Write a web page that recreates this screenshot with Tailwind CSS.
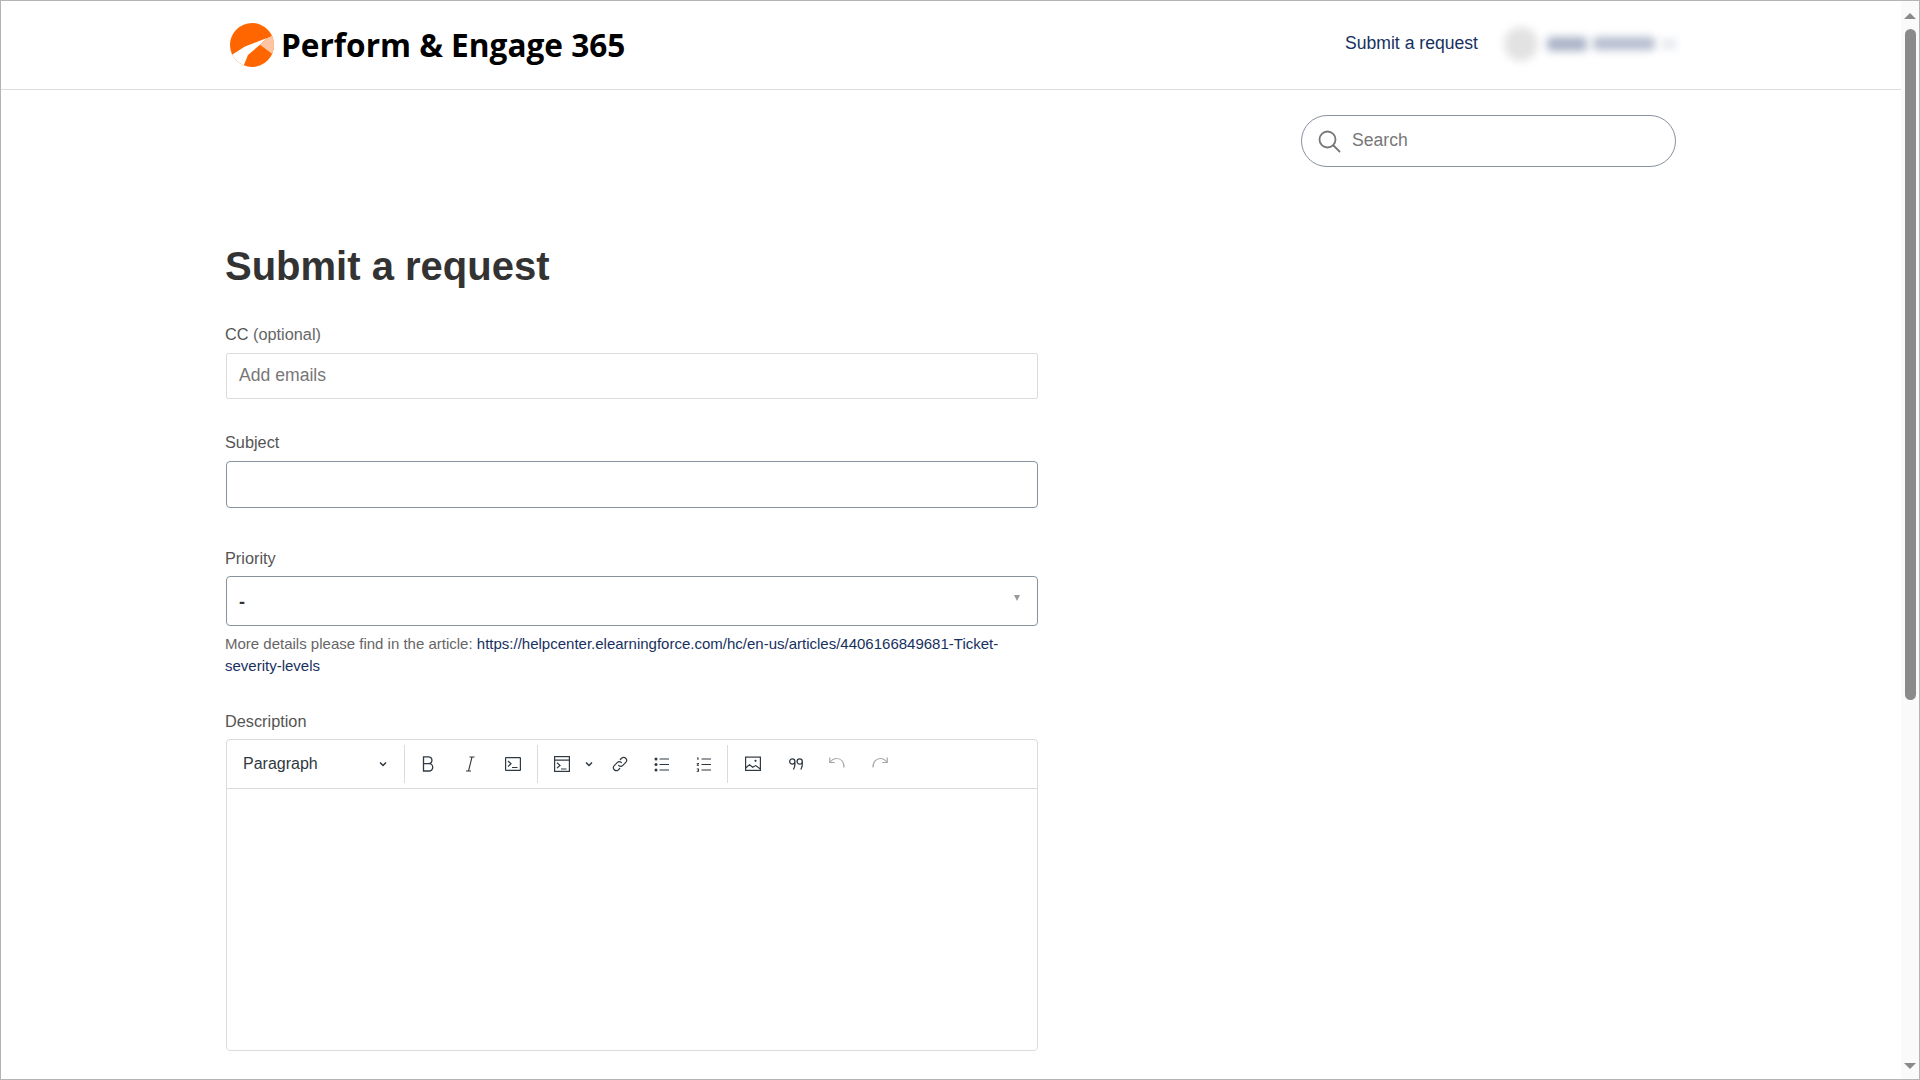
<!DOCTYPE html>
<html lang="en">
<head>
<meta charset="utf-8">
<title>Submit a request</title>
<script src="https://cdn.jsdelivr.net/npm/@tailwindcss/browser@4"></script>
</head>
<body class="m-0 bg-white">
<div class="flex h-[1080px] w-[1920px] overflow-hidden border border-[#b4b4b4] bg-white font-['Liberation_Sans',Arial,sans-serif] text-[#2f3941]">
  <main class="min-w-0 flex-1">
    <header class="flex h-[89px] items-center border-b border-[#dcdcdc] pl-[229px] pr-[224px]">
      <a class="flex items-center gap-[7px]">
        <svg class="h-[44px] w-[44px] shrink-0" viewBox="0 0 44 44">
          <defs><clipPath id="c"><circle cx="22" cy="22" r="22"/></clipPath></defs>
          <circle cx="22" cy="22" r="22" fill="#ff6600"/>
          <g clip-path="url(#c)">
            <path d="M37 15 L15 23.5 L0 33 L13.5 43 L18 32 L30 21.7 Z" fill="#fff"/>
            <path d="M30 21.7 L37 15 L44 12 L44 31 L41 30 Z" fill="#ffc5a3"/>
          </g>
        </svg>
        <span class="font-['Open_Sans',sans-serif] text-[31.6px] font-bold leading-none text-black">Perform &amp; Engage 365</span>
      </a>
      <nav class="ml-auto flex items-center pb-[3px]">
        <a class="text-[17.6px] leading-none text-[#17315f]">Submit a request</a>
        <div class="ml-[26px] flex items-center">
          <div class="h-[34px] w-[34px] rounded-full bg-[#e2e2e2] blur-[4px]"></div>
          <div class="ml-[9px] h-[14px] w-[40px] rounded bg-[#a9b2c6] blur-[4px]"></div>
          <div class="ml-[6px] h-[13px] w-[62px] rounded bg-[#b4bccd] blur-[4px]"></div>
          <div class="ml-[6px] h-[12px] w-[16px] bg-[#eceef2] blur-[3px]"></div>
        </div>
      </nav>
    </header>
    <div class="pl-[224px] pr-[225px]">
      <div class="flex justify-end pt-[25px]">
        <div class="flex h-[52px] w-[375px] items-center rounded-full border border-[#87929d] pl-[15px]">
          <svg class="h-[24px] w-[24px] text-[#777]" viewBox="0 0 24 24" fill="none" stroke="currentColor" stroke-width="1.8" stroke-linecap="round"><circle cx="10.5" cy="10.5" r="8"/><path d="M16.5 16.5l6 6"/></svg>
          <span class="mb-[2px] ml-[11px] text-[17.6px] text-[#777]">Search</span>
        </div>
      </div>
      <h1 class="mt-[74px] text-[40px] font-bold leading-[50px] text-[#333]">Submit a request</h1>
      <form class="w-[813px]">
        <label class="mt-[32px] block text-[16.3px] leading-[22px] text-[#555]">CC <span class="text-[#666]">(optional)</span></label>
        <div class="mt-[8px] ml-[1px] flex h-[46px] items-center rounded-[2px] border border-[#dcdcdc] pb-[2px] pl-[12px] text-[17.6px] text-[#777]">Add emails</div>
        <label class="mt-[32px] block text-[16.3px] leading-[22px] text-[#555]">Subject</label>
        <div class="mt-[8px] ml-[1px] h-[47px] rounded-[4px] border border-[#87929d]"></div>
        <label class="mt-[39px] block text-[16.3px] leading-[22px] text-[#555]">Priority</label>
        <div class="relative mt-[7px] ml-[1px] flex h-[50px] items-center rounded-[4px] border border-[#87929d] pl-[12px] text-[18px] font-bold text-[#333]">
          <span class="pt-[2px]">-</span>
          <span class="absolute right-[17px] top-[18px] h-0 w-0 border-x-[3.5px] border-t-[6px] border-x-transparent border-t-[#999]"></span>
        </div>
        <p class="mt-[7px] text-[15px] leading-[22px] text-[#666]">More details please find in the article: <a class="text-[#17315f]">https://helpcenter.elearningforce.com/hc/en-us/articles/4406166849681-Ticket-severity-levels</a></p>
        <label class="mt-[33px] block text-[16.3px] leading-[22px] text-[#555]">Description</label>
        <div class="mt-[7px] ml-[1px] h-[312px] rounded-[4px] border border-[#d8dcde]">
          <div class="flex h-[49px] items-center border-b border-[#d8dcde]">
            <div class="flex w-[177px] items-center pl-[16px] pr-[16px] text-[16px] leading-none">
              <span>Paragraph</span>
              <svg class="ml-auto h-[10px] w-[10px]" viewBox="0 0 10 10" fill="none" stroke="#2f3941" stroke-width="1.5"><path d="M2 3.5l3 3 3-3"/></svg>
            </div>
            <i class="h-[38px] w-px bg-[#d8dcde]"></i>
            <span class="flex w-[46px] justify-center">
              <svg class="h-[16px] w-[16px]" viewBox="0 0 16 16" fill="none" stroke="#2f3941" stroke-width="1.3"><path d="M3.5.8h5a3.4 3.4 0 0 1 0 6.900h-5zM3.500 7.700h5.600a3.600 3.600 0 0 1 0 7.300H3.500z"/></svg>
            </span>
            <span class="ml-[-2px] flex w-[42px] justify-center">
              <svg class="h-[16px] w-[16px]" viewBox="0 0 16 16" fill="none" stroke="#2f3941" stroke-width="1.100"><path d="M7.500 1h5M4 15h5M10 1L6.500 15" /></svg>
            </span>
            <span class="flex w-[44px] justify-center">
              <svg class="h-[16px] w-[16px]" viewBox="0 0 16 16" fill="none" stroke="#2f3941" stroke-width="1.200"><rect x=".6" y="1.600" width="14.800" height="12.800" rx=".5"/><path d="M3 5l3 2.800L3 10.500M7 11.500h5.500"/></svg>
            </span>
            <i class="ml-[2px] h-[38px] w-px bg-[#d8dcde]"></i>
            <span class="flex w-[48px] justify-center">
              <svg class="h-[16px] w-[16px]" viewBox="0 0 16 16" fill="none" stroke="#2f3941" stroke-width="1.200"><rect x=".6" y=".6" width="14.800" height="14.800"/><path d="M.6 4.200h14.800M3 6.800l3 2.600-3 2.700M7 13h5.500"/></svg>
            </span>
            <svg class="ml-[-2px] h-[10px] w-[10px]" viewBox="0 0 10 10" fill="none" stroke="#2f3941" stroke-width="1.5"><path d="M2 3.500l3 3 3-3"/></svg>
            <span class="ml-[5px] flex w-[42px] justify-center">
              <svg class="h-[16px] w-[16px]" viewBox="0 0 16 16" fill="none" stroke="#2f3941" stroke-width="1.200" stroke-linecap="round"><path d="M6.600 9.400a3 3 0 0 0 4.200 0l3.200-3.200a3 3 0 0 0-4.200-4.200L8.300 3.500"/><path d="M9.400 6.600a3 3 0 0 0-4.200 0L2 9.800A3 3 0 0 0 6.200 14l1.500-1.500"/></svg>
            </span>
            <span class="flex w-[42px] justify-center">
              <svg class="h-[16px] w-[16px]" viewBox="0 0 16 16" fill="#2f3941"><circle cx="2" cy="3" r="1.500"/><circle cx="2" cy="8.500" r="1.500"/><circle cx="2" cy="14" r="1.500"/><path d="M5.500 2.500H15v1H5.500zM5.500 8H15v1H5.500zM5.500 13.500H15v1H5.500z"/></svg>
            </span>
            <span class="flex w-[42px] justify-center">
              <svg class="h-[16px] w-[16px]" viewBox="0 0 16 16" fill="#2f3941"><path d="M1 1.500h1.500V4H1.500V2.500H1zM.7 7h2.300v1L1.800 9H3v.8H.7v-1L2 7.800H.7zM.7 12.500H3v3.200H.7v-.8H2v-.4H1.200v-.7H2v-.5H.7zM5.500 2.500H15v1H5.500zM5.500 8H15v1H5.500zM5.500 13.500H15v1H5.500z"/></svg>
            </span>
            <i class="ml-[2px] h-[38px] w-px bg-[#d8dcde]"></i>
            <span class="flex w-[49px] justify-center">
              <svg class="h-[16px] w-[16px]" viewBox="0 0 16 16" fill="none" stroke="#2f3941" stroke-width="1.200"><rect x=".6" y="1.100" width="14.800" height="13.300"/><path d="M.6 12l3.900-3.200 3.200 2.500 3-1.700 4.700 3.400"/><circle cx="10.500" cy="4.800" r="1.100" fill="#2f3941" stroke="none"/></svg>
            </span>
            <span class="flex w-[38px] justify-center">
              <svg class="h-[16px] w-[16px]" viewBox="0 0 16 16" fill="none" stroke="#2f3941" stroke-width="1.300"><path d="M6.900 5.500a2.600 2.600 0 1 1-5.200 0 2.600 2.600 0 0 1 5.200 0v2.500c0 2.500-.6 4-1.500 5.500M14.300 5.500a2.600 2.600 0 1 1-5.200 0 2.600 2.600 0 0 1 5.200 0v2.500c0 2.500-.6 4-1.500 5.500"/></svg>
            </span>
            <span class="flex w-[44px] justify-center">
              <svg class="h-[16px] w-[16px]" viewBox="0 0 16 16" fill="none" stroke="#a0a6ab" stroke-width="1.200"><path d="M.8 1.500v5h5"/><path d="M.8 6.500C3 3.500 5 2.500 7.500 2.500c4.500 0 7.500 3.500 7.500 9"/></svg>
            </span>
            <span class="flex w-[42px] justify-center">
              <svg class="h-[16px] w-[16px]" viewBox="0 0 16 16" fill="none" stroke="#a0a6ab" stroke-width="1.200"><path d="M15.200 1.500v5h-5"/><path d="M15.200 6.500C13 3.500 11 2.500 8.500 2.500c-4.500 0-7.500 3.500-7.500 9"/></svg>
            </span>
          </div>
        </div>
      </form>
    </div>
  </main>
  <aside class="flex h-full w-[18px] shrink-0 flex-col items-center bg-[#fafafa]">
    <span class="mt-[12px] h-0 w-0 border-x-[6px] border-b-[6px] border-x-transparent border-b-[#8a8a8a]"></span>
    <span class="mt-[10px] h-[671px] w-[11px] rounded-full bg-[#8a8a8a]"></span>
    <span class="mt-auto mb-[10px] h-0 w-0 border-x-[6px] border-t-[6px] border-x-transparent border-t-[#8a8a8a]"></span>
  </aside>
</div>
</body>
</html>
